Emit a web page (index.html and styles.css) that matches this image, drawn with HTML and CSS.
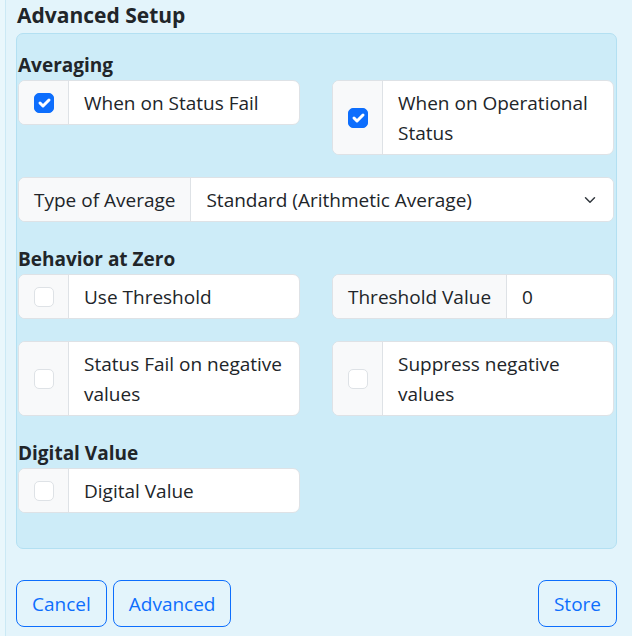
FILE: index.html
```html
<!DOCTYPE html>
<html lang="en">
<head>
    <meta charset="UTF-8">
    <meta name="viewport" content="width=device-width, initial-scale=1.0">
    <title>Advanced Setup</title>
    <link rel="stylesheet" href="styles.css">
</head>
<body>
    <div class="panel">
        <h2 class="panel-title">Advanced Setup</h2>

        <div class="setup-box">
            <h3 class="section-title">Averaging</h3>
            <div class="field-grid">
                <label class="input-group">
                    <span class="group-addon">
                        <span class="check checked">
                            <svg viewBox="0 0 20 20" width="20" height="20"><path d="m6 10 3 3 6-6" fill="none" stroke="#fff" stroke-width="3" stroke-linecap="round" stroke-linejoin="round"/></svg>
                        </span>
                    </span>
                    <span class="group-text">When on Status Fail</span>
                </label>
                <label class="input-group">
                    <span class="group-addon">
                        <span class="check checked">
                            <svg viewBox="0 0 20 20" width="20" height="20"><path d="m6 10 3 3 6-6" fill="none" stroke="#fff" stroke-width="3" stroke-linecap="round" stroke-linejoin="round"/></svg>
                        </span>
                    </span>
                    <span class="group-text">When on Operational Status</span>
                </label>
                <div class="input-group full">
                    <span class="group-label">Type of Average</span>
                    <div class="select-wrap">
                        <select class="group-select">
                            <option>Standard (Arithmetic Average)</option>
                            <option>Weighted Average</option>
                        </select>
                        <svg class="chevron" viewBox="0 0 16 16" width="16" height="12"><path d="m2 5 6 6 6-6" fill="none" stroke="#343a40" stroke-width="2" stroke-linecap="round" stroke-linejoin="round"/></svg>
                    </div>
                </div>
            </div>

            <h3 class="section-title spaced">Behavior at Zero</h3>
            <div class="field-grid">
                <label class="input-group">
                    <span class="group-addon"><span class="check"></span></span>
                    <span class="group-text">Use Threshold</span>
                </label>
                <div class="input-group">
                    <span class="group-label">Threshold Value</span>
                    <input class="group-input" type="text" value="0">
                </div>
                <label class="input-group">
                    <span class="group-addon"><span class="check"></span></span>
                    <span class="group-text">Status Fail on negative values</span>
                </label>
                <label class="input-group">
                    <span class="group-addon"><span class="check"></span></span>
                    <span class="group-text">Suppress negative values</span>
                </label>
            </div>

            <h3 class="section-title spaced">Digital Value</h3>
            <div class="field-grid">
                <label class="input-group">
                    <span class="group-addon"><span class="check"></span></span>
                    <span class="group-text">Digital Value</span>
                </label>
            </div>
        </div>

        <div class="footer">
            <button class="btn">Cancel</button>
            <button class="btn">Advanced</button>
            <button class="btn push">Store</button>
        </div>
    </div>
</body>
</html>
```

FILE: styles.css
```css
body {
    margin: 0;
    font-family: "Open Sans", "Noto Sans", sans-serif;
    font-size: 19px;
    line-height: 30px;
    color: #212529;
    background-color: #e9f7fc;
}
.panel {
    margin-left: 5px;
    border-left: 1px solid #cbe9f5;
    background-color: #e3f4fb;
    padding: 0 15px 9px 10px;
    min-height: 636px;
    box-sizing: border-box;
}
.panel-title {
    margin: 0;
    padding: 3px 0 5px 1px;
    font-size: 21px;
    line-height: 25px;
    font-weight: 700;
}
.setup-box {
    border: 1px solid #b3e0f2;
    border-radius: 7px;
    background-color: #cdecf8;
    padding: 19px 2px 35px 1px;
}
.section-title {
    margin: 0 0 3px 0;
    font-size: 19px;
    line-height: 24px;
    font-weight: 700;
}
.section-title.spaced {
    margin-top: 25px;
}
.field-grid {
    display: grid;
    grid-template-columns: 1fr 1fr;
    column-gap: 32px;
    row-gap: 22px;
    align-items: start;
}
.input-group {
    display: flex;
    align-items: stretch;
    border: 1px solid #dee2e6;
    border-radius: 7px;
    background-color: #fff;
    overflow: hidden;
}
.input-group.full {
    grid-column: 1 / 3;
}
.group-addon {
    display: flex;
    align-items: center;
    justify-content: center;
    width: 49px;
    flex-shrink: 0;
    background-color: #f8f9fa;
    border-right: 1px solid #dee2e6;
}
.group-label {
    padding: 6.5px 15px;
    background-color: #f8f9fa;
    border-right: 1px solid #dee2e6;
    white-space: nowrap;
}
.group-text {
    padding: 6.5px 10px 6.5px 15px;
}
.check {
    display: block;
    width: 20px;
    height: 20px;
    box-sizing: border-box;
    border: 1px solid #dee2e6;
    border-radius: 5px;
    background-color: #fff;
}
.check svg {
    display: block;
    margin: -1px;
}
.check.checked {
    background-color: #0d6efd;
    border-color: #0d6efd;
}
.select-wrap {
    position: relative;
    flex-grow: 1;
}
.group-select {
    appearance: none;
    width: 100%;
    height: 100%;
    border: none;
    background: #fff;
    font: inherit;
    color: #212529;
    padding: 6.5px 40px 6.5px 15px;
}
.chevron {
    position: absolute;
    right: 15px;
    top: 50%;
    margin-top: -6px;
    pointer-events: none;
}
.group-input {
    flex-grow: 1;
    min-width: 0;
    border: none;
    font: inherit;
    color: #212529;
    padding: 6.5px 15px;
    background: #fff;
}
.footer {
    display: flex;
    gap: 6px;
    margin-top: 31px;
}
.btn {
    font: inherit;
    color: #0d6efd;
    background-color: transparent;
    border: 1px solid #0d6efd;
    border-radius: 8px;
    padding: 7.5px 15px;
    cursor: pointer;
}
.btn.push {
    margin-left: auto;
}
```
